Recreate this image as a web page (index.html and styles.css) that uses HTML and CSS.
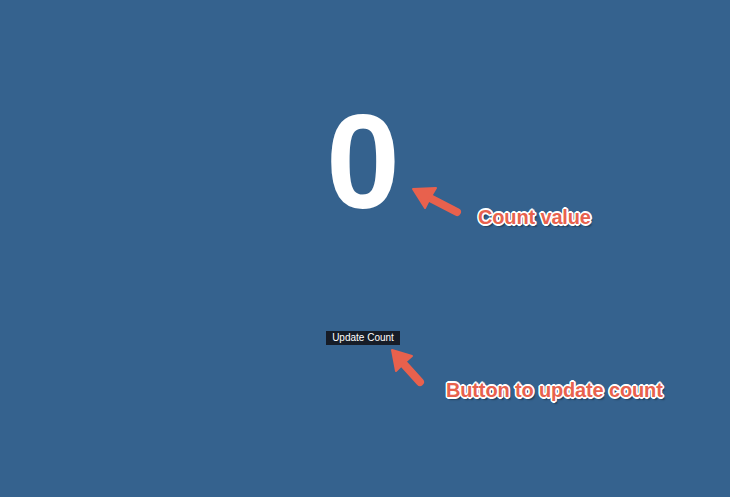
FILE: index.html
```html
<!DOCTYPE html>
<html>
<head>
<meta charset="utf-8">
<link rel="stylesheet" href="styles.css">
</head>
<body>
<main class="app">
  <div class="count">0</div>
  <button class="update">Update Count</button>
</main>
<svg class="arrows" width="730" height="497" viewBox="0 0 730 497">
  <g fill="#e8614d" stroke="#e8614d" stroke-linejoin="round">
    <line x1="457" y1="212" x2="428" y2="197" stroke-width="8" stroke-linecap="round"/>
    <polygon points="413,189 436,188 430,198 425,208" stroke-width="2"/>
    <line x1="420" y1="382" x2="401" y2="361" stroke-width="8" stroke-linecap="round"/>
    <polygon points="392,350 412,356 404,363 396,371" stroke-width="2"/>
  </g>
</svg>
<div class="note note-count">Count value</div>
<div class="note note-button">Button to update count</div>
</body>
</html>
```
FILE: styles.css
```css
html, body {
  margin: 0;
  padding: 0;
  width: 730px;
  height: 497px;
  overflow: hidden;
  background: #35628e;
  font-family: "Liberation Sans", Arial, sans-serif;
}
.app {
  display: flex;
  flex-direction: column;
  align-items: center;
  padding-top: 85px;
  margin-left: -4px;
}
.count {
  color: #fff;
  font-weight: bold;
  font-size: 133px;
  line-height: 155px;
}
.update {
  margin-top: 91px;
  background: #161c27;
  color: #fff;
  border: none;
  font-family: "Liberation Sans", Arial, sans-serif;
  font-size: 10px;
  height: 14px;
  line-height: 14px;
  padding: 0 6px;
}
.arrows {
  position: absolute;
  left: 0;
  top: 0;
}
.note {
  position: absolute;
  color: #e8614d;
  font-weight: bold;
  font-size: 20px;
  letter-spacing: -0.15px;
  white-space: nowrap;
  text-shadow:
    1.6px 0 0 #fff, -1.6px 0 0 #fff, 0 1.6px 0 #fff, 0 -1.6px 0 #fff,
    1.2px 1.2px 0 #fff, -1.2px 1.2px 0 #fff, 1.2px -1.2px 0 #fff, -1.2px -1.2px 0 #fff,
    2px 2.5px 1.5px rgba(0,0,0,0.35);
}
.note-count {
  left: 478px;
  top: 206px;
}
.note-button {
  left: 446px;
  top: 379px;
}
```
